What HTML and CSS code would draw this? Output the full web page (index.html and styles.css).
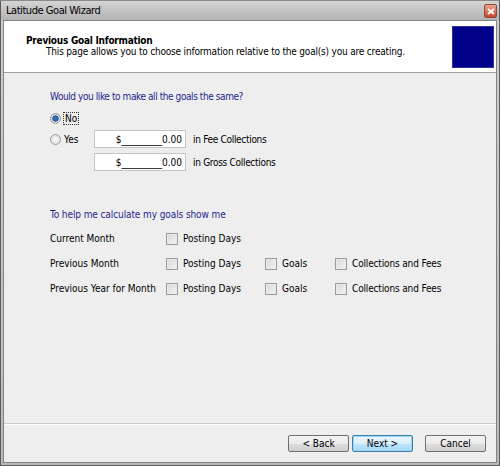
FILE: index.html
```html
<!DOCTYPE html>
<html>
<head>
<meta charset="utf-8">
<link rel="stylesheet" href="styles.css">
</head>
<body>
<div class="window">
  <div class="titlebar">
    <span class="title">Latitude Goal Wizard</span>
    <span class="close"><svg width="8" height="7" viewBox="0 0 8 7"><path d="M1 1 L7 6 M7 1 L1 6" stroke="#fff" stroke-width="1.8"/></svg></span>
  </div>
  <div class="frame">
    <div class="header">
      <div class="header-text">
        <div class="h-title">Previous Goal Information</div>
        <div class="h-sub">This page allows you to choose information relative to the goal(s) you are creating.</div>
      </div>
      <div class="logo"></div>
    </div>
    <div class="main">
      <div class="q q1">Would you like to make all the goals the same?</div>
      <div class="radio-row">
        <span class="radio checked"></span><span class="focus">No</span>
      </div>
      <div class="yes-grid">
        <div class="radio-row yes"><span class="radio"></span><span>Yes</span></div>
        <div class="field"><span>$_________0.00</span></div>
        <div class="flabel">in Fee Collections</div>
        <div></div>
        <div class="field"><span>$_________0.00</span></div>
        <div class="flabel">in Gross Collections</div>
      </div>
      <div class="q q2">To help me calculate my goals show me</div>
      <div class="grid">
        <div class="rl">Current Month</div>
        <div class="cb"><span class="box"></span>Posting Days</div>
        <div></div><div></div>
        <div class="rl">Previous Month</div>
        <div class="cb"><span class="box"></span>Posting Days</div>
        <div class="cb"><span class="box"></span>Goals</div>
        <div class="cb"><span class="box"></span>Collections and Fees</div>
        <div class="rl">Previous Year for Month</div>
        <div class="cb"><span class="box"></span>Posting Days</div>
        <div class="cb"><span class="box"></span>Goals</div>
        <div class="cb"><span class="box"></span>Collections and Fees</div>
      </div>
    </div>
    <div class="footer">
      <button class="btn">&lt; Back</button>
      <button class="btn next">Next &gt;</button>
      <button class="btn cancel">Cancel</button>
    </div>
  </div>
</div>
</body>
</html>
```
FILE: styles.css
```css
html, body { margin: 0; padding: 0; }
body {
  width: 500px; height: 466px; overflow: hidden;
  font-family: "DejaVu Sans Condensed", "DejaVu Sans", sans-serif;
  font-stretch: semi-condensed;
  font-size: 10px;
  color: #000;
  background: #fff;
}
.window {
  width: 500px; height: 466px; box-sizing: border-box;
  display: flex; flex-direction: column;
  background: linear-gradient(#cfcfcf, #b9b9b9);
  border: 1px solid #5c5c5c;
  border-top-color: #8a8a8a;
}
.titlebar {
  height: 19px; flex: none;
  display: flex; align-items: center; justify-content: space-between;
  padding: 0 2px 0 5px;
  background: linear-gradient(180deg, #d4d4d4 0%, #c3c3c3 50%, #b4b4b4 100%);
}
.title { font-size: 11px; color: #000; letter-spacing: -0.45px; }
.close {
  width: 11px; height: 12px; margin-top: 1px;
  display: flex; align-items: center; justify-content: center;
  background: linear-gradient(#e9a58e, #c9462a);
  border: 1px solid #8d4a3c; border-radius: 2px;
}
.frame {
  flex: 1; display: flex; flex-direction: column;
  margin: 0 2px 2px 2px;
  border: 1px solid #838383;
  background: #eeeeee;
}
.header {
  height: 51px; flex: none;
  background: #fff;
  border-bottom: 1px solid #a0a0a0;
  display: flex; justify-content: space-between;
  padding: 0 2px 0 0;
}
.header-text { padding: 14px 0 0 22px; }
.h-title { font-weight: bold; font-size: 10px; letter-spacing: -0.25px; }
.h-sub { margin: 0 0 0 20px; font-size: 10px; letter-spacing: -0.19px; }
.logo {
  width: 40px; height: 40px; margin-top: 5px;
  background: #00008b;
  border: 1px solid #2e2e9e;
}
.main { flex: 1; padding: 18px 0 0 46px; }
.q { color: #1f1f8c; }
.q1 { letter-spacing: -0.42px; }
.radio-row { display: flex; align-items: center; height: 16px; margin-top: 8px; }
.radio {
  width: 9px; height: 9px; border-radius: 50%;
  border: 1px solid #9a9a9a;
  background: radial-gradient(circle, #fafafa 0%, #d9d9d9 100%);
  margin: 0 3px 0 0;
  box-sizing: content-box;
}
.radio.checked {
  background: radial-gradient(circle, #3b78c0 0%, #2a5d9e 45%, #e0e0e0 55%, #d0d0d0 100%);
}
.focus { outline: 1px dotted #333; outline-offset: 0; padding: 0 1px; }
.yes-grid {
  display: grid;
  grid-template-columns: 37px 92px auto;
  row-gap: 5px; column-gap: 7px;
  align-items: center;
  margin-top: 4px;
}
.yes-grid .yes { margin-top: 0; }
.field {
  height: 18px; box-sizing: border-box;
  background: #fff; border: 1px solid #c4c4c4;
  display: flex; align-items: center; justify-content: flex-end;
  padding: 0 3px 0 0; width: 92px;
}
.field span { font-size: 10px; }
.flabel { letter-spacing: -0.3px; }
.q2 { margin-top: 38px; letter-spacing: -0.1px; }
.grid {
  display: grid;
  grid-template-columns: 116px 99px 70px auto;
  grid-auto-rows: 25px;
  align-items: center;
  margin-top: 6px;
  white-space: nowrap;
}
.grid .cb:last-child, .grid .cb:nth-child(8) { letter-spacing: -0.15px; }
.cb { display: flex; align-items: center; }
.box {
  width: 10px; height: 10px; box-sizing: content-box;
  border: 1px solid #9b9b9b;
  background: linear-gradient(135deg, #d8d8d8, #f4f4f4);
  margin-right: 5px;
  box-shadow: inset 0 0 0 1px #eaeaea;
}
.footer {
  height: 37px; flex: none;
  border-top: 1px solid #c8c8c8;
  box-shadow: inset 0 1px 0 #fbfbfb;
  display: flex; align-items: center; justify-content: flex-end;
  padding: 1px 10px 0 0;
}
.btn {
  height: 17px; width: 61px;
  font-family: "DejaVu Sans Condensed", "DejaVu Sans", sans-serif; font-size: 10px;
  font-stretch: semi-condensed;
  border: 1px solid #707070; border-radius: 2px;
  background: linear-gradient(#f2f2f2 0%, #ebebeb 50%, #dddddd 51%, #cfcfcf 100%);
  padding: 0; margin-left: 3px; color: #000;
}
.btn.next {
  border-color: #3c7fb1;
  background: linear-gradient(#eaf6fd 0%, #d9f0fc 50%, #bee6fd 51%, #a7d9f5 100%);
  box-shadow: inset 0 0 0 1px #9ed4f2;
}
.btn.cancel { margin-left: 12px; }
```
